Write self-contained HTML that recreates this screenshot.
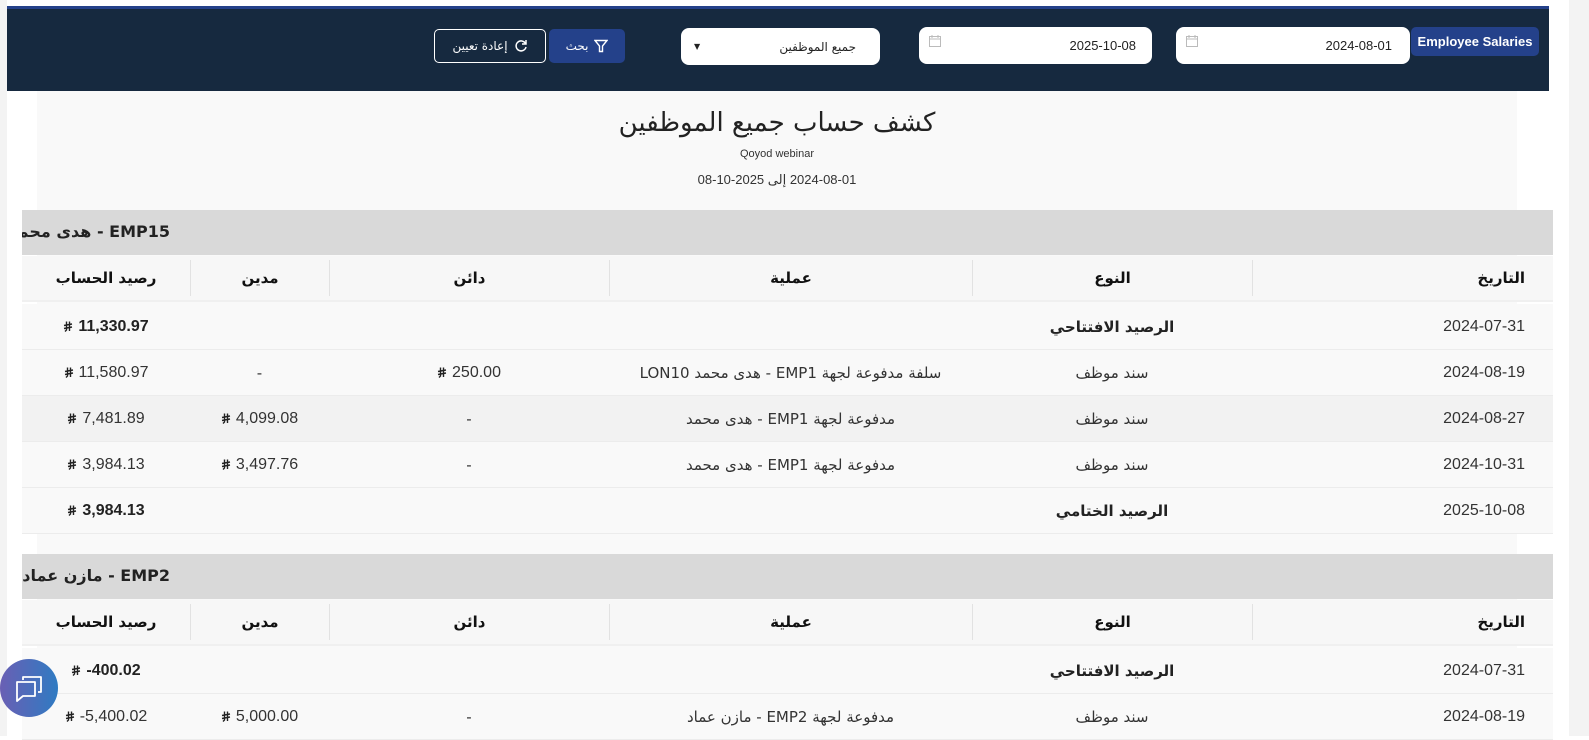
<!DOCTYPE html>
<html><head><meta charset="utf-8">
<style>
*{margin:0;padding:0;box-sizing:border-box}
body{width:1589px;height:736px;overflow:hidden;background:#fff;font-family:"Liberation Sans","DejaVu Sans",sans-serif;color:#222;position:relative}
.abs{position:absolute}
.strip{left:0;top:0;width:7px;height:736px;background:#f3f3f3}
.rstrip{left:1569px;top:0;width:20px;height:736px;background:#f3f3f3}
.content{left:37px;top:91px;width:1480px;height:645px;background:#f9f9f9}
.hdr{left:7px;top:6px;width:1542px;height:85px;background:#16293f;border-top:3px solid #24418a}
.inp{background:#fff;border-radius:8px;height:37px;top:27px;font-size:13px;color:#222;display:flex;align-items:center}
.btn{top:29px;height:34px;border-radius:5px;font-size:12px;color:#fff;display:flex;align-items:center;justify-content:center;gap:6px;font-family:"DejaVu Sans",sans-serif}
.title{left:37px;width:1480px;text-align:center}
.grp{left:22px;width:1531px;height:45px;background:#d9d9d9;font-weight:bold;font-size:16px;overflow:hidden;white-space:nowrap;font-family:"DejaVu Sans",sans-serif}
.grp span{position:absolute;right:1383px;top:12px;direction:rtl}
.row{left:22px;width:1531px;height:46px;display:flex;direction:rtl;align-items:center;border-bottom:1px solid #ececec;background:#f9f9f9;font-size:15px;color:#333;font-family:"DejaVu Sans",sans-serif}
.row.alt{background:#f2f2f2}
.row.h{background:#f7f7f7;font-weight:bold;color:#111;border-bottom:2px solid #f0f0f0}
.row>div{height:100%;display:flex;align-items:center;justify-content:center}
.row>div.c1{width:301px;justify-content:flex-start;padding-right:28px}
.c2{width:280px}.c3{width:363px}.c4{width:280px}.c5{width:139px}.c6{width:168px}
.h>div{border-left:1px solid #e2e2e2;height:36px!important}
.h>div:last-child{border-left:none}
.b{font-weight:bold;color:#222}
.num{font-family:"Liberation Sans",sans-serif;font-size:16px}
.num span{direction:ltr;unicode-bidi:embed;display:inline-flex;align-items:center;gap:5px}
.iso{unicode-bidi:isolate;direction:ltr}
</style></head><body>
<svg width="0" height="0" style="position:absolute"><defs><symbol id="rs" viewBox="0 0 10 11"><path d="M3.5 0.5v8.5l-1.5 1.5M6.5 0.5v9.5M1 4.5l8-1.5M1 7.5l8-1.5" fill="none" stroke="#222" stroke-width="1.4"/></symbol></defs></svg>
<div class="abs strip"></div>
<div class="abs rstrip"></div>
<div class="abs content"></div>
<div class="abs hdr"></div>

<div class="abs btn" style="left:1411px;top:27px;width:128px;height:29px;background:#24418a;font-family:'Liberation Sans',sans-serif;font-weight:bold;font-size:13px">Employee Salaries</div>
<div class="abs inp" style="left:1176px;width:234px"><svg style="position:absolute;left:10px;top:8px" width="12" height="12" viewBox="0 0 12 12"><rect x="0.5" y="1.5" width="11" height="10" fill="none" stroke="#bbb"/><line x1="0.5" y1="4" x2="11.5" y2="4" stroke="#bbb"/><line x1="3" y1="0" x2="3" y2="3" stroke="#bbb"/><line x1="9" y1="0" x2="9" y2="3" stroke="#bbb"/></svg><span style="position:absolute;right:18px">2024-08-01</span></div>
<div class="abs inp" style="left:919px;width:233px"><svg style="position:absolute;left:10px;top:8px" width="12" height="12" viewBox="0 0 12 12"><rect x="0.5" y="1.5" width="11" height="10" fill="none" stroke="#bbb"/><line x1="0.5" y1="4" x2="11.5" y2="4" stroke="#bbb"/><line x1="3" y1="0" x2="3" y2="3" stroke="#bbb"/><line x1="9" y1="0" x2="9" y2="3" stroke="#bbb"/></svg><span style="position:absolute;right:16px">2025-10-08</span></div>
<div class="abs inp" style="left:681px;width:199px;top:28px;font-family:'DejaVu Sans',sans-serif;font-size:12px"><span style="position:absolute;left:13px;font-size:8px">▼</span><span style="position:absolute;right:24px">جميع الموظفين</span></div>
<div class="abs btn" style="left:549px;width:76px;background:#24418a"><span>بحث</span><svg width="14" height="14" viewBox="0 0 14 14"><path d="M1 1.5h12L8.5 7v5.5h-3V7z" fill="none" stroke="#fff" stroke-width="1.4"/></svg></div>
<div class="abs btn" style="left:434px;width:112px;border:1px solid #fff;background:transparent"><span>إعادة تعيين</span><svg width="14" height="14" viewBox="0 0 14 14"><path d="M11.5 4.5A5 5 0 1 0 12 8" fill="none" stroke="#fff" stroke-width="1.5"/><path d="M12 1v4h-4" fill="none" stroke="#fff" stroke-width="1.5"/></svg></div>

<div class="abs title" style="top:108px;font-size:26px;font-family:'DejaVu Sans',sans-serif;color:#222">كشف حساب جميع الموظفين</div>
<div class="abs title" style="top:148px;font-size:11px;color:#333">Qoyod webinar</div>
<div class="abs title" style="top:172px;font-size:13px;color:#333;direction:ltr"><span class="iso">08-10-2025</span> <span class="iso" style="direction:rtl">إلى</span> <span class="iso">2024-08-01</span></div>

<div class="abs grp" style="top:210px"><span>EMP15 - هدى محمد</span></div>
<div class="abs row h" style="top:256px"><div class="c1">التاريخ</div><div class="c2">النوع</div><div class="c3">عملية</div><div class="c4">دائن</div><div class="c5">مدين</div><div class="c6">رصيد الحساب</div></div>
<div class="abs row" style="top:304px"><div class="c1 num">2024-07-31</div><div class="c2 b">الرصيد الافتتاحي</div><div class="c3"></div><div class="c4"></div><div class="c5"></div><div class="c6 b num"><span><svg width="10" height="11"><use href="#rs"/></svg>11,330.97</span></div></div>
<div class="abs row" style="top:350px"><div class="c1 num">2024-08-19</div><div class="c2">سند موظف</div><div class="c3">سلفة مدفوعة لجهة EMP1 - هدى محمد LON10</div><div class="c4 num"><span><svg width="10" height="11"><use href="#rs"/></svg>250.00</span></div><div class="c5">-</div><div class="c6 num"><span><svg width="10" height="11"><use href="#rs"/></svg>11,580.97</span></div></div>
<div class="abs row alt" style="top:396px"><div class="c1 num">2024-08-27</div><div class="c2">سند موظف</div><div class="c3">مدفوعة لجهة EMP1 - هدى محمد</div><div class="c4">-</div><div class="c5 num"><span><svg width="10" height="11"><use href="#rs"/></svg>4,099.08</span></div><div class="c6 num"><span><svg width="10" height="11"><use href="#rs"/></svg>7,481.89</span></div></div>
<div class="abs row" style="top:442px"><div class="c1 num">2024-10-31</div><div class="c2">سند موظف</div><div class="c3">مدفوعة لجهة EMP1 - هدى محمد</div><div class="c4">-</div><div class="c5 num"><span><svg width="10" height="11"><use href="#rs"/></svg>3,497.76</span></div><div class="c6 num"><span><svg width="10" height="11"><use href="#rs"/></svg>3,984.13</span></div></div>
<div class="abs row" style="top:488px"><div class="c1 num">2025-10-08</div><div class="c2 b">الرصيد الختامي</div><div class="c3"></div><div class="c4"></div><div class="c5"></div><div class="c6 b num"><span><svg width="10" height="11"><use href="#rs"/></svg>3,984.13</span></div></div>

<div class="abs grp" style="top:554px"><span>EMP2 - مازن عماد</span></div>
<div class="abs row h" style="top:600px"><div class="c1">التاريخ</div><div class="c2">النوع</div><div class="c3">عملية</div><div class="c4">دائن</div><div class="c5">مدين</div><div class="c6">رصيد الحساب</div></div>
<div class="abs row" style="top:648px"><div class="c1 num">2024-07-31</div><div class="c2 b">الرصيد الافتتاحي</div><div class="c3"></div><div class="c4"></div><div class="c5"></div><div class="c6 b num"><span><svg width="10" height="11"><use href="#rs"/></svg>-400.02</span></div></div>
<div class="abs row" style="top:694px"><div class="c1 num">2024-08-19</div><div class="c2">سند موظف</div><div class="c3">مدفوعة لجهة EMP2 - مازن عماد</div><div class="c4">-</div><div class="c5 num"><span><svg width="10" height="11"><use href="#rs"/></svg>5,000.00</span></div><div class="c6 num"><span><svg width="10" height="11"><use href="#rs"/></svg>-5,400.02</span></div></div>

<div class="abs" style="left:0;top:659px;width:58px;height:58px;border-radius:50%;background:linear-gradient(90deg,#6a5fb4,#2f7bc2);display:flex;align-items:center;justify-content:center">
<svg width="30" height="28" viewBox="0 0 30 28"><path d="M9 6V3h18v15h-3" fill="none" stroke="#fff" stroke-width="1.8" stroke-linejoin="round"/><path d="M3 8h18v14H9l-6 5z" fill="none" stroke="#fff" stroke-width="1.8" stroke-linejoin="round"/></svg></div>
</body></html>
